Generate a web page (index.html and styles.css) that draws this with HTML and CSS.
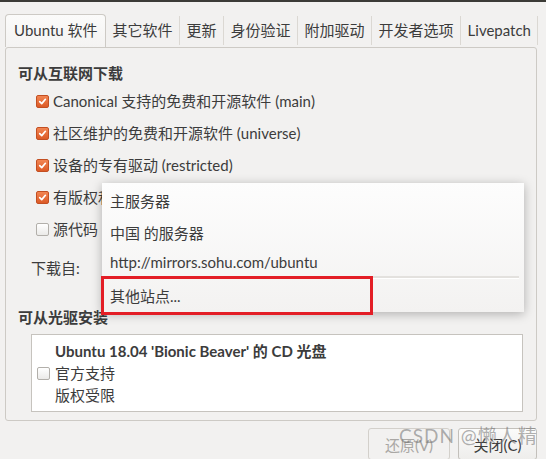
FILE: index.html
```html
<!DOCTYPE html>
<html lang="zh-CN">
<head>
    <meta charset="UTF-8">
    <meta name="viewport" content="width=device-width, initial-scale=1.0">
    <title>软件和更新</title>
    <link rel="stylesheet" href="styles.css">
</head>
<body>

    <div class="topline"></div>

    <div class="window">
        <div class="tabs">
            <div class="tab active">Ubuntu 软件</div>
            <div class="tab">其它软件</div>
            <div class="tab">更新</div>
            <div class="tab">身份验证</div>
            <div class="tab">附加驱动</div>
            <div class="tab">开发者选项</div>
            <div class="tab last">Livepatch</div>
        </div>

        <div class="panel">
            <div class="heading">可从互联网下载</div>
            <div class="option">
                <span class="check on"><svg viewBox="0 0 13 13"><path d="M3.2 6.6 L5.6 9 L9.9 3.9"/></svg></span>
                Canonical 支持的免费和开源软件 (main)
            </div>
            <div class="option">
                <span class="check on"><svg viewBox="0 0 13 13"><path d="M3.2 6.6 L5.6 9 L9.9 3.9"/></svg></span>
                社区维护的免费和开源软件 (universe)
            </div>
            <div class="option">
                <span class="check on"><svg viewBox="0 0 13 13"><path d="M3.2 6.6 L5.6 9 L9.9 3.9"/></svg></span>
                设备的专有驱动 (restricted)
            </div>
            <div class="option">
                <span class="check on"><svg viewBox="0 0 13 13"><path d="M3.2 6.6 L5.6 9 L9.9 3.9"/></svg></span>
                有版权和合法性问题的软件 (multiverse)
            </div>
            <div class="option">
                <span class="check"></span>
                源代码
            </div>
            <div class="source-row">下载自:</div>

            <div class="heading cd-heading">可从光驱安装</div>
            <div class="cd-list">
                <span class="check"></span>
                <div class="cd-text">
                    <div class="cd-title">Ubuntu 18.04 'Bionic Beaver' 的 CD 光盘</div>
                    <div>官方支持</div>
                    <div>版权受限</div>
                </div>
            </div>
        </div>

        <div class="buttons">
            <button class="revert" disabled>还原(V)</button>
            <button class="close">关闭(C)</button>
        </div>
    </div>

    <!-- open drop-down of the "下载自" combo box -->
    <div class="mirror-menu">
        <div class="menu-item">主服务器</div>
        <div class="menu-item">中国 的服务器</div>
        <div class="menu-item short">http://mirrors.sohu.com/ubuntu</div>
        <div class="menu-sep"></div>
        <div class="menu-item">其他站点...</div>
    </div>
    <div class="highlight"></div>

    <div class="watermark">CSDN @懒人精</div>

</body>
</html>
```

FILE: styles.css
```css
body {
    margin: 0;
    width: 546px;
    height: 459px;
    overflow: hidden;
    position: relative;
    background-color: #f2f1f0;
    color: #3c3c3c;
    font-family: 'Lato', 'Noto Sans CJK SC', sans-serif;
    font-size: 15px;
    line-height: 20px;
}

.topline {
    height: 2px;
    background-color: #3c3b37;
}

.window {
    padding: 12px 9px 0 5px;
}

/* notebook tabs */
.tabs {
    display: flex;
    height: 33px;
}

.tab {
    display: flex;
    align-items: center;
    padding: 0 6px 2px 7px;
    margin: 2px 0;
    border-right: 1px solid #dbd8d3;
    white-space: nowrap;
}

.tab.active {
    margin: 0;
    padding: 0 7px 3px 8px;
    border: 1px solid #cdcac5;
    border-bottom: none;
    border-radius: 4px 4px 0 0;
    background: linear-gradient(#fbfbfa, #f4f3f2);
}

.tab.last {
    flex: 1;
}

.panel {
    border: 1px solid #cdcac5;
    border-radius: 3px;
    padding: 15px 12px 8px 12px;
}

.heading {
    font-weight: bold;
    height: 20px;
}

.option {
    display: flex;
    align-items: center;
    height: 32px;
    padding-left: 18px;
}

.heading + .option {
    margin-top: 2px;
}

.check {
    width: 11px;
    height: 11px;
    margin-right: 4px;
    border: 1px solid #b2afaa;
    border-radius: 2px;
    background: linear-gradient(#ffffff, #ebeae8);
    flex-shrink: 0;
}

.check.on {
    border-color: #c34f22;
    background: linear-gradient(#f28552, #dc5a26);
}

.check svg {
    display: block;
    width: 11px;
    height: 11px;
}

.check path {
    fill: none;
    stroke: #fff;
    stroke-width: 2;
    stroke-linecap: round;
    stroke-linejoin: round;
}

.source-row {
    display: flex;
    align-items: center;
    height: 36px;
    margin-top: 5px;
    padding-left: 13px;
}

.cd-heading {
    margin-top: 21px;
}

.cd-list {
    display: flex;
    align-items: center;
    height: 76px;
    margin: 7px 1px 0 13px;
    border: 1px solid #c6c3be;
    background-color: #fff;
    padding-left: 5px;
}

.cd-list .check {
    margin-right: 5px;
}

.cd-text div {
    height: 22px;
    line-height: 22px;
}

.cd-text .cd-title {
    font-weight: bold;
}

.buttons {
    display: flex;
    justify-content: flex-end;
    gap: 8px;
    margin-top: 7px;
}

button {
    height: 32px;
    padding: 0;
    border: 1px solid #c3c0bb;
    border-radius: 3px;
    background: linear-gradient(#fbfbfa, #eeedeb);
    font-family: inherit;
    font-size: 15px;
    color: #3c3c3c;
}

button.revert {
    width: 82px;
    color: #a9a7a4;
    border-color: #d3d0cb;
    background: #f2f1f0;
}

button.close {
    width: 79px;
}

/* popup list */
.mirror-menu {
    position: absolute;
    left: 102px;
    top: 183px;
    width: 422px;
    height: 127px;
    padding-top: 2px;
    background: linear-gradient(#fdfdfd, #f3f2f1);
    box-shadow: 0 2px 10px rgba(0, 0, 0, 0.28);
}

.menu-item {
    display: flex;
    align-items: center;
    height: 32px;
    padding-left: 8px;
    white-space: nowrap;
}

.menu-item.short {
    height: 26px;
}

.menu-sep {
    height: 2px;
    margin: 1px 5px 1px 2px;
    background-color: #e3e1de;
    border-bottom: 1px solid #fff;
}

.highlight {
    position: absolute;
    left: 101px;
    top: 276px;
    width: 266px;
    height: 33px;
    border: 3px solid #e31e26;
}

.watermark {
    position: absolute;
    left: 399px;
    top: 423px;
    font-size: 19px;
    line-height: 26px;
    letter-spacing: 1px;
    color: rgba(110, 110, 110, 0.55);
    white-space: nowrap;
}
```
